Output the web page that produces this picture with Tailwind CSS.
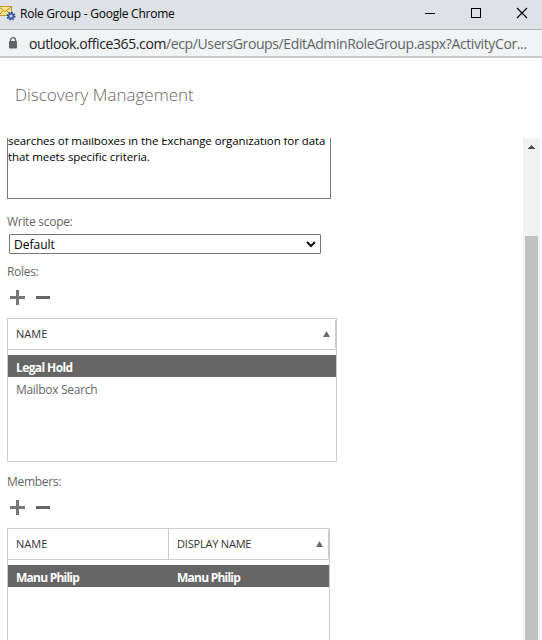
<!DOCTYPE html>
<html lang="en">

<head>
  <meta charset="UTF-8" />
  <title>Role Group</title>
  <script src="https://cdn.jsdelivr.net/npm/@tailwindcss/browser@4"></script>
</head>

<body class="w-[542px] h-[640px] overflow-hidden bg-white flex flex-col font-['Open_Sans','Noto_Sans',sans-serif] text-[12px] leading-4 text-[#666] tracking-[-0.3px] whitespace-nowrap">
  <!-- window title bar -->
  <header class="h-[29px] shrink-0 bg-[#dee1e6] flex items-start">
    <svg class="w-4 h-6 shrink-0" viewBox="0 0 16 24">
      <path d="M-1 6.5h12.5v9H-1z" fill="#fbe58d" stroke="#c79a35" />
      <path d="M-1 7l6 4.500 6.500-4.500M-1 15l4-4M11 15l-4-4" fill="none" stroke="#b88a2b" />
      <circle cx="11" cy="16" r="3.600" fill="#6f8fce" stroke="#36549b" stroke-width="1.800" stroke-dasharray="1.600 1.200" />
      <circle cx="11" cy="16" r="2.600" fill="#6f8fce" stroke="#36549b" />
      <circle cx="11" cy="16" r="1" fill="#e8eefc" />
    </svg>
    <h1 class="ml-[4px] mt-[6px] text-black tracking-[-0.23px]">Role Group - Google Chrome</h1>
    <div class="ml-auto mr-[14px] mt-[7px] flex gap-[34px]">
      <svg class="w-3 h-3" viewBox="0 0 12 12" shape-rendering="crispEdges"><path d="M1 6h10v1H1z" /></svg>
      <svg class="w-3 h-3" viewBox="0 0 12 12" shape-rendering="crispEdges"><path d="M1.5 1.5h9v9h-9z" fill="none" stroke="#000" /></svg>
      <svg class="w-3 h-3" viewBox="0 0 12 12"><path d="M1 1l10 10M11 1L1 11" stroke="#000" stroke-width="1.1" /></svg>
    </div>
  </header>

  <!-- address bar -->
  <div class="h-[29px] shrink-0 bg-[#f1f3f4] border-t border-b-2 border-t-[#b0b1b3] border-b-[#c6c7c8] flex items-center">
    <svg class="ml-2 w-[10px] h-[12px] shrink-0" viewBox="0 0 10 12">
      <path d="M2.5 5V3.2a2.5 2.5 0 0 1 5 0V5" fill="none" stroke="#5f6368" stroke-width="1.3" />
      <rect x="1" y="4" width="8" height="7.5" rx="1" fill="#5f6368" />
    </svg>
    <p class="ml-[11px] mt-px text-[14px] text-[#5f6368] tracking-[-0.385px]"><span class="text-[#202124]">outlook.office365.com</span>/ecp/UsersGroups/EditAdminRoleGroup.aspx?ActivityCor...</p>
  </div>

  <h2 class="h-[80px] shrink-0 pl-[15px] pt-[25px] text-[17px] leading-6 font-light tracking-normal">Discovery Management</h2>

  <div class="flex-1 min-h-0 flex overflow-hidden">
    <main class="w-[523px] pl-[7px] overflow-hidden">
      <div class="w-[324px] h-[61px] border border-t-0 border-[#767676] rounded-b-[1px] overflow-hidden text-black text-[11.5px] tracking-[-0.08px]">
        <p class="-mt-[5px]">searches of mailboxes in the Exchange organization for data<br />that meets specific criteria.</p>
      </div>

      <p class="mt-[15px]">Write scope:</p>
      <div class="ml-[2px] mt-[4px] w-[312px] h-5 border border-[#767676] rounded-[1px] flex items-center pl-1 pr-[4px] text-black tracking-normal">
        <span class="mt-px">Default</span>
        <svg class="ml-auto w-[10px] h-2" viewBox="0 0 10 8"><path d="M1 2l4 4 4-4" fill="none" stroke="#111" stroke-width="2" /></svg>
      </div>

      <p class="mt-[10px]">Roles:</p>
      <div class="mt-[10px] ml-[3px] flex gap-[11px]">
        <svg class="w-[15px] h-[15px]" viewBox="0 0 15 15" fill="#777"><path d="M6 0h3v6h6v3H9v6H6V9H0V6h6z" /></svg>
        <svg class="w-[14px] h-[15px]" viewBox="0 0 14 15" fill="#666"><path d="M0 6h14v3H0z" /></svg>
      </div>

      <section class="mt-[13px] w-[330px] h-[144px] border border-[#c8cfd1]">
        <div class="h-[31px] border-b border-[#c8cfd1] flex items-center pl-2 text-[11px] text-[#333] tracking-normal">
          <span>NAME</span>
          <div class="ml-auto self-stretch my-px w-[13px] border-r border-[#c8cacc] flex items-center">
            <svg class="w-[7px] h-[6px]" viewBox="0 0 7 6"><path d="M3.5 0L7 6H0z" fill="#6b6b6b" /></svg>
          </div>
        </div>
        <div class="mt-[5px] h-[22px] bg-[#666] pl-2 leading-[25px] font-bold text-white tracking-[-0.6px]">Legal Hold</div>
        <div class="pl-2 leading-[26px]">Mailbox Search</div>
      </section>

      <p class="mt-[12px]">Members:</p>
      <div class="mt-[10px] ml-[3px] flex gap-[11px]">
        <svg class="w-[15px] h-[15px]" viewBox="0 0 15 15" fill="#777"><path d="M6 0h3v6h6v3H9v6H6V9H0V6h6z" /></svg>
        <svg class="w-[14px] h-[15px]" viewBox="0 0 14 15" fill="#666"><path d="M0 6h14v3H0z" /></svg>
      </div>

      <section class="mt-[13px] w-[323px] h-[144px] border border-[#c8cfd1]">
        <div class="h-[31px] border-b border-[#c8cfd1] flex items-center pl-2 text-[11px] text-[#333] tracking-normal">
          <div class="w-[153px] self-stretch border-r border-[#c8cacc] flex items-center">NAME</div>
          <span class="pl-2 tracking-[-0.2px]">DISPLAY NAME</span>
          <div class="ml-auto self-stretch my-px w-[13px] border-r border-[#c8cacc] flex items-center">
            <svg class="w-[7px] h-[6px]" viewBox="0 0 7 6"><path d="M3.5 0L7 6H0z" fill="#6b6b6b" /></svg>
          </div>
        </div>
        <div class="mt-[5px] h-[22px] bg-[#666] pl-2 leading-[25px] font-bold text-white tracking-[-0.76px] flex">
          <span class="w-[161px]">Manu Philip</span>
          <span>Manu Philip</span>
        </div>
      </section>
    </main>

    <!-- scrollbar -->
    <div class="w-[17px] bg-[#f1f1f1] flex flex-col items-center pt-[7px]">
      <svg class="w-[7px] h-1 shrink-0" viewBox="0 0 7 4" shape-rendering="crispEdges"><path d="M3.5 0L7 4H0z" fill="#505050" /></svg>
      <div class="mt-[87px] w-[13px] flex-1 bg-[#c1c1c1]"></div>
    </div>
  </div>
</body>

</html>
